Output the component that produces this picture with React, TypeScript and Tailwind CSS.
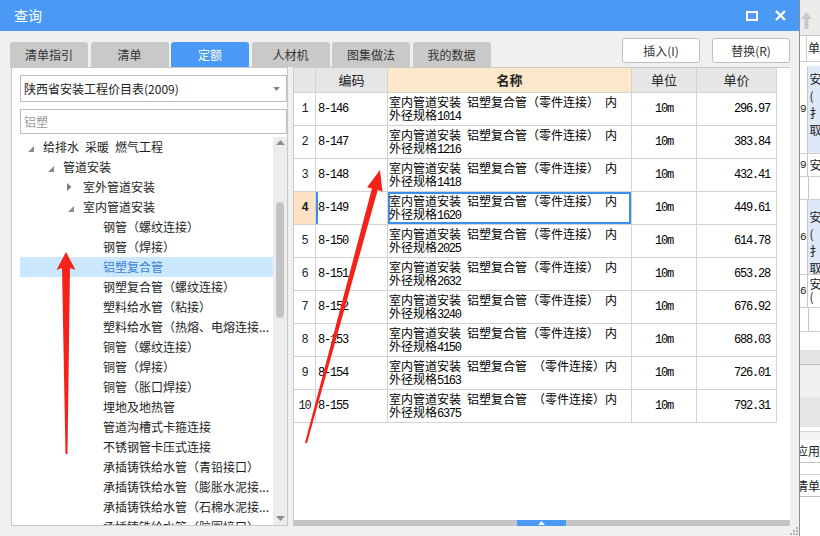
import React from "react";

type TreeItem = { text: string; level: number; icon?: "open" | "closed"; active?: boolean };

const tree: TreeItem[] = [
  { text: "给排水\u2002采暖\u2002燃气工程", level: 0, icon: "open" },
  { text: "管道安装", level: 1, icon: "open" },
  { text: "室外管道安装", level: 2, icon: "closed" },
  { text: "室内管道安装", level: 2, icon: "open" },
  { text: "钢管（螺纹连接）", level: 3 },
  { text: "钢管（焊接）", level: 3 },
  { text: "铝塑复合管", level: 3, active: true },
  { text: "钢塑复合管（螺纹连接）", level: 3 },
  { text: "塑料给水管（粘接）", level: 3 },
  { text: "塑料给水管（热熔、电熔连接...", level: 3 },
  { text: "铜管（螺纹连接）", level: 3 },
  { text: "铜管（焊接）", level: 3 },
  { text: "铜管（胀口焊接）", level: 3 },
  { text: "埋地及地热管", level: 3 },
  { text: "管道沟槽式卡箍连接", level: 3 },
  { text: "不锈钢管卡压式连接", level: 3 },
  { text: "承插铸铁给水管（青铅接口）", level: 3 },
  { text: "承插铸铁给水管（膨胀水泥接...", level: 3 },
  { text: "承插铸铁给水管（石棉水泥接...", level: 3 },
  { text: "承插铸铁给水管（胶圈接口）", level: 3 },
];

const levelPad = ["pl-[8px]", "pl-[28px]", "pl-[48px]", "pl-[68px]"];

const rows = [
  { code: "8-146", spec: "1014", price: "296.97" },
  { code: "8-147", spec: "1216", price: "383.84" },
  { code: "8-148", spec: "1418", price: "432.41" },
  { code: "8-149", spec: "1620", price: "449.61", current: true },
  { code: "8-150", spec: "2025", price: "614.78" },
  { code: "8-151", spec: "2632", price: "653.28" },
  { code: "8-152", spec: "3240", price: "676.92" },
  { code: "8-153", spec: "4150", price: "688.03" },
  { code: "8-154", spec: "5163", price: "726.01", alt: true },
  { code: "8-155", spec: "6375", price: "792.31", alt: true },
];

const tabs = ["清单指引", "清单", "定额", "人材机", "图集做法", "我的数据"];

const mono = "font-['Liberation_Mono','Noto_Sans_CJK_SC',monospace] text-[12px] tracking-[-1.2px] text-black";

function TreeIcon({ kind }: { kind?: "open" | "closed" }) {
  if (kind === "open")
    return (
      <svg width="6" height="6" viewBox="0 0 6 6" className="mt-[3px]">
        <polygon points="6,0 6,6 0,6" fill="#8c8c8c" />
      </svg>
    );
  if (kind === "closed")
    return (
      <svg width="5" height="8" viewBox="0 0 5 8" className="ml-[-1px]">
        <polygon points="0,0 4.5,4 0,8" fill="#7c7c7c" />
      </svg>
    );
  return null;
}

function LeftPanel() {
  return (
    <div className="w-[277px] h-full bg-white border border-[#c9c9c9] flex flex-col pl-[8px]">
      <div className="mt-[7px] h-[27px] border border-[#bdbdbd] flex items-center pl-[3px] pr-[6px] text-[12px] text-[#222]">
        <span className="flex-1">陕西省安装工程价目表(2009)</span>
        <svg width="7" height="4" viewBox="0 0 7 4">
          <polygon points="0,0 7,0 3.5,4" fill="#888" />
        </svg>
      </div>
      <div className="mt-[7px] h-[25px] border border-[#bdbdbd] flex items-center pl-[3px] text-[12px] text-[#9a9a9a]">
        铝塑
      </div>
      <div className="mt-[3px] flex-1 flex overflow-hidden">
        <div className="flex-1 overflow-hidden">
          {tree.map((t, i) => (
            <div
              key={i}
              className={`h-[20px] flex items-center whitespace-nowrap text-[12px] ${levelPad[t.level]} ${
                t.active ? "bg-[#cce8ff] text-[#3a7fd5]" : "text-[#1e1e1e]"
              }`}
            >
              <div className="w-[15px] flex items-center">
                <TreeIcon kind={t.icon} />
              </div>
              <span>{t.text}</span>
            </div>
          ))}
        </div>
        <div className="w-[14px] bg-[#ececec] flex flex-col items-center">
          <svg width="9" height="5" viewBox="0 0 9 5" className="mt-[3px]">
            <polygon points="0,5 9,5 4.5,0" fill="#8e8e8e" />
          </svg>
          <div className="mt-[57px] w-[8px] h-[116px] rounded-[4px] bg-[#c3c3c3]" />
          <div className="flex-1" />
          <svg width="9" height="5" viewBox="0 0 9 5" className="mb-[4px]">
            <polygon points="0,0 9,0 4.5,5" fill="#8e8e8e" />
          </svg>
        </div>
      </div>
    </div>
  );
}

function NameText({ spec, alt }: { spec: string; alt?: boolean }) {
  return (
    <div className="pl-[1px] pt-[2px] leading-[13px] text-[12px] text-black whitespace-nowrap overflow-hidden">
      {alt ? (
        <div>室内管道安装{"\u2002"}铝塑复合管{"\u2002"}（零件连接）内</div>
      ) : (
        <div>室内管道安装{"\u2002"}铝塑复合管（零件连接）{"\u2002"}内</div>
      )}
      <div>
        外径规格<span className="font-['Liberation_Mono',monospace] tracking-[-1.3px]">{spec}</span>
      </div>
    </div>
  );
}

function TablePanel() {
  const cell = "border-r border-b border-[#d3d3d3]";
  return (
    <div className="w-[497px] h-full bg-white border-l border-t border-[#c9c9c9] flex flex-col">
      <div className="grid grid-cols-[22px_72px_244px_65px_80px] w-[482px]">
        <div className={`${cell} h-[25px] bg-[#e6e6e6]`} />
        <div className={`${cell} h-[25px] bg-[#e6e6e6] flex items-center justify-center text-[13px] text-[#222]`}>编码</div>
        <div className={`${cell} h-[25px] bg-[#fde7ca] flex items-center justify-center text-[13px] font-bold text-[#222]`}>名称</div>
        <div className={`${cell} h-[25px] bg-[#e6e6e6] flex items-center justify-center text-[13px] text-[#222]`}>单位</div>
        <div className={`${cell} h-[25px] bg-[#e6e6e6] flex items-center justify-center text-[13px] text-[#222]`}>单价</div>
        {rows.map((r, i) => (
          <React.Fragment key={r.code}>
            <div
              className={`${cell} h-[33px] flex items-center justify-center font-['Liberation_Mono',monospace] text-[12px] tracking-[-1.2px] text-[#222] ${
                r.current ? "bg-[#fde3c3] font-bold" : ""
              }`}
            >
              {i + 1}
            </div>
            <div
              className={`${cell} h-[33px] flex items-center pl-[2px] ${mono} ${
                r.current ? "shadow-[inset_2px_0_0_#3c8ee8]" : ""
              }`}
            >
              {r.code}
            </div>
            <div className={`${cell} h-[33px] ${r.current ? "shadow-[inset_0_0_0_2px_#3c8ee8]" : ""}`}>
              <NameText spec={r.spec} alt={r.alt} />
            </div>
            <div className={`${cell} h-[33px] flex items-center justify-center ${mono}`}>10m</div>
            <div className={`${cell} h-[33px] flex items-center justify-end pr-[6px] ${mono}`}>{r.price}</div>
          </React.Fragment>
        ))}
      </div>
      <div className="flex-1" />
      <div className="h-[6px] bg-[#c4c4c4] flex">
        <div className="ml-[223px] w-[49px] h-full bg-[#4a9af5] flex items-center justify-center">
          <svg width="7" height="4" viewBox="0 0 7 4">
            <polygon points="0,4 7,4 3.5,0" fill="#fff" />
          </svg>
        </div>
      </div>
    </div>
  );
}

function BackgroundStrip() {
  const blue = "bg-[#dde8f8]";
  const num = "w-[9px] bg-white border-r border-[#c8c8c8] flex items-center justify-center text-[11px] font-['Liberation_Mono',monospace]";
  return (
    <div className="w-[20px] h-full flex flex-col bg-white overflow-hidden text-[12px] text-[#222]">
      <div className="h-[36px] bg-[#ebebeb] border-b border-[#c6c6c6] flex items-start pl-[1px] pt-[12px]">
        <svg width="11" height="17" viewBox="0 0 11 17">
          <polygon points="5.5,0 11,7 7.5,7 7.5,17 3.5,17 3.5,7 0,7" fill="#c9c9c9" />
        </svg>
      </div>
      <div className="h-[26px] flex border-b border-[#cfcfcf]">
        <div className="w-[11px] border-r border-[#cfcfcf]" />
        <div className="pl-[1px] pt-[3px] whitespace-nowrap">单</div>
      </div>
      <div className="h-[4px]" />
      <div className="h-[88px] flex border-b border-[#cfcfcf]">
        <div className={num}>9</div>
        <div className={`flex-1 ${blue} pl-[2px] pt-[4px] leading-[17px] whitespace-nowrap`}>
          安<br />(<br />扌<br />取
        </div>
      </div>
      <div className="h-[23px] flex border-b border-[#cfcfcf]">
        <div className={num}>9</div>
        <div className="flex-1 pl-[2px] leading-[22px] whitespace-nowrap">安</div>
      </div>
      <div className="h-[23px] flex border-b border-[#cfcfcf]">
        <div className={num} />
      </div>
      <div className="h-[75px] flex border-b border-[#cfcfcf]">
        <div className={num}>6</div>
        <div className={`flex-1 ${blue} pl-[2px] pt-[8px] leading-[17px] whitespace-nowrap`}>
          安<br />(<br />扌<br />取
        </div>
      </div>
      <div className="h-[33px] flex border-b border-[#cfcfcf]">
        <div className={num}>6</div>
        <div className="flex-1 pl-[2px] pt-[2px] leading-[13px] whitespace-nowrap">
          安<br />(
        </div>
      </div>
      <div className="h-[24px] flex border-b border-[#cfcfcf]">
        <div className={num} />
      </div>
      <div className="h-[18px] bg-white" />
      <div className="h-[15px] bg-[#e4e4e4] border-b border-[#bdbdbd]" />
      <div className="h-[32px] bg-[#f0f0f0]" />
      <div className="h-[30px] bg-[#e6e6e6]" />
      <div className="h-[5px] bg-white border-b border-[#d6d6d6]" />
      <div className="h-[8px] bg-[#f4f4f4]" />
      <div className="h-[23px] border-b border-[#bdbdbd] whitespace-nowrap leading-[22px] ml-[-4px]">应用</div>
      <div className="h-[12px] border-b border-[#d6d6d6]" />
      <div className="h-[22px] border-b border-[#bdbdbd] whitespace-nowrap leading-[22px] ml-[-4px]">清单</div>
      <div className="flex-1 bg-white" />
    </div>
  );
}

export default function App() {
  return (
    <div className="w-[820px] h-[536px] relative overflow-hidden flex font-['Noto_Sans_CJK_SC',sans-serif] bg-white">
      <div className="w-[800px] h-full flex flex-col bg-[#f0f0f0] border-r border-[#8f8f8f]">
        {/* title bar */}
        <div className="h-[31px] bg-[#4a9af5] flex items-center pl-[14px] pr-[8px] text-white">
          <span className="text-[14px] flex-1">查询</span>
          <svg width="12" height="10" viewBox="0 0 12 10" className="mr-[17px]">
            <rect x="1" y="1" width="10" height="8" fill="none" stroke="#fff" strokeWidth="2" />
          </svg>
          <svg width="11" height="11" viewBox="0 0 11 11" className="mr-[5px]">
            <path d="M1 1 L10 10 M10 1 L1 10" stroke="#fff" strokeWidth="2.4" />
          </svg>
        </div>

        {/* tabs + buttons */}
        <div className="h-[36px] flex pl-[10px] pr-[9px]">
          <div className="flex gap-[2.5px] self-end">
            {tabs.map((t) => (
              <div
                key={t}
                className={`w-[78px] h-[25px] rounded-t-[3px] flex items-center justify-center text-[12px] ${
                  t === "定额" ? "bg-[#4a9af5] text-white" : "bg-[#c9c9c9] text-[#333]"
                }`}
              >
                {t}
              </div>
            ))}
          </div>
          <div className="flex-1" />
          <div className="flex gap-[12px] mt-[7px]">
            <button className="w-[78px] h-[25px] bg-white border border-[#c0c0c0] rounded-[3px] text-[12px] text-[#333]">
              插入(I)
            </button>
            <button className="w-[78px] h-[25px] bg-white border border-[#c0c0c0] rounded-[3px] text-[12px] text-[#333]">
              替换(R)
            </button>
          </div>
        </div>

        {/* content */}
        <div className="h-[459px] flex pl-[11px] gap-[5px]">
          <LeftPanel />
          <TablePanel />
        </div>

        <div className="flex-1 flex justify-end items-end pr-[1px] pb-[1px]">
          <svg width="8" height="8" viewBox="0 0 8 8">
            <rect x="6" y="0" width="2" height="2" fill="#b5b5b5" />
            <rect x="3" y="3" width="2" height="2" fill="#b5b5b5" />
            <rect x="6" y="3" width="2" height="2" fill="#b5b5b5" />
            <rect x="0" y="6" width="2" height="2" fill="#b5b5b5" />
            <rect x="3" y="6" width="2" height="2" fill="#b5b5b5" />
            <rect x="6" y="6" width="2" height="2" fill="#b5b5b5" />
          </svg>
        </div>
      </div>

      <BackgroundStrip />

      {/* red annotation arrows */}
      <svg className="absolute inset-0 pointer-events-none" width="820" height="536" viewBox="0 0 820 536">
        <polygon points="66,252 75.5,270 70,268 67.5,454 65.5,454 62,268 56.5,270" fill="#f5221a" />
        <polygon
          points="380,170 382.5,191.4 377.7,190.1 307,443.3 305,442.7 371.9,188.5 367.1,187.2"
          fill="#f5221a"
        />
      </svg>
    </div>
  );
}
